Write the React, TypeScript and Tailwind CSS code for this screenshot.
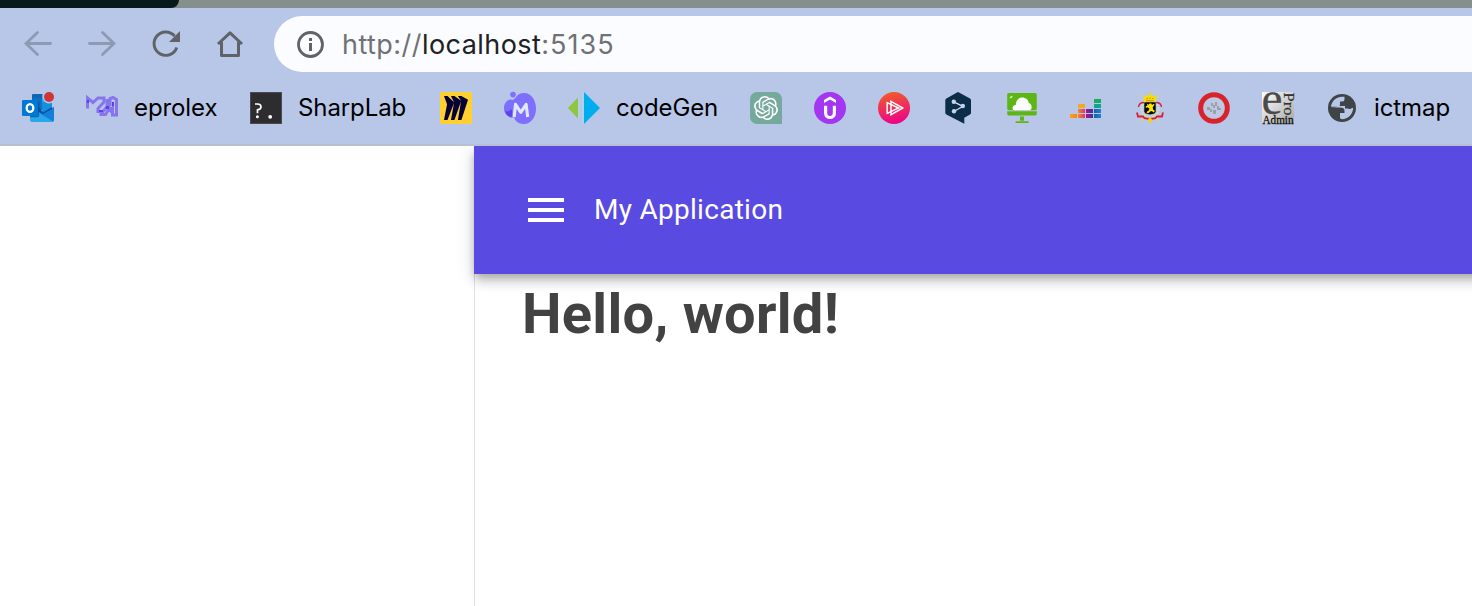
import type { ReactNode } from "react";
import { SiOpenai } from "react-icons/si";

function Icon({ children }: { children: ReactNode }) {
  return (
    <svg viewBox="0 0 32 32" className="block h-8 w-8 shrink-0 overflow-visible">
      {children}
    </svg>
  );
}

function Outlook() {
  return (
    <Icon>
      <path d="M11 2h18a1 1 0 0 1 1 1v15H10V3a1 1 0 0 1 1-1Z" fill="#1066b5" />
      <path d="M20 2h10v8H20z" fill="#28a8ea" />
      <path d="M10 6h10v12H10z" fill="#0f6fc4" />
      <path d="M20 10h10v10H20z" fill="#1490df" />
      <path d="M8 15l12 7 12-7v13a2 2 0 0 1-2 2H10a2 2 0 0 1-2-2Z" fill="#28a8ea" />
      <path d="M32 15v13a2 2 0 0 1-1 1.6L18 21.5Z" fill="#1280d8" />
      <path d="M16 14l5 6.500 9-5.500v2l-9 5-5-2Z" fill="#0a5299" />
      <path d="M16 9.500h1.200v14q0 1.800-1.800 1.800H8V24h8Z" fill="#0a4c94" opacity=".7" />
      <rect y="8" width="16" height="16" rx="1.2" fill="#0078d4" />
      <ellipse cx="8" cy="16" rx="3.3" ry="3.9" fill="none" stroke="#fff" strokeWidth="2.3" />
      <circle cx="27" cy="5" r="6.4" fill="#b8c6e8" />
      <circle cx="27" cy="5" r="5" fill="#d13438" />
    </Icon>
  );
}

function Eprolex() {
  return (
    <Icon>
      <g fill="none" stroke="#8675ef" strokeWidth="3">
        <path d="M1.500 16.500V6l5.500 4.500L12 6h6v4l-6 6.500v3h5l5-6" />
        <path d="M21 7v6l2.500 3-4 6.500h-6M24 14V6.500l3-1 3.500 2V23h-4v-7l-3 4" />
      </g>
      <path d="M26 10h2v4h-2zM13 18h4v2h-4zM20 14h3v3h-3zM1 8h2v3H1z" fill="#5f3df0" />
    </Icon>
  );
}

function SharpLab() {
  return (
    <Icon>
      <rect width="32" height="32" fill="#4a4a50" />
      <rect x="1" y="1" width="30" height="30" fill="#2d2d30" />
      <path d="M5 12h2.500q3.500 0 3.500 2.800t-3.500 3v3.400" fill="none" stroke="#fff" strokeWidth="1.7" />
      <circle cx="7.4" cy="24.8" r="1.5" fill="#fff" />
      <circle cx="20.2" cy="24.8" r="1.9" fill="#fff" />
    </Icon>
  );
}

function Miro() {
  return (
    <Icon>
      <rect width="32" height="32" rx="2" fill="#ffd02f" />
      <path
        transform="translate(4 4)"
        fill="#050038"
        d="M17.392 0H13.9L17 4.808 10.444 0H6.949l3.102 6.3L3.494 0H0l3.05 8.131L0 24h3.494L10.05 6.985 6.949 24h3.494L17 5.494 13.899 24h3.493L24 3.672 17.392 0z"
      />
    </Icon>
  );
}

function MBlob() {
  return (
    <Icon>
      <circle cx="9" cy="2.6" r="2.8" fill="#7e6fff" />
      <path d="M0 16C0 10 5 6 9 8c4-3 4-7 11-7 8 0 12 8 12 16s-5 15-12 15c-6 0-9-3-10-7-2 1-4 1-6-1-3-2-4-5-4-8Z" fill="#7e6fff" />
      <path d="M.8 18c2 3 5 1 7.200-1v7.500c-4 1-6.400-2.500-7.200-6.500Z" fill="#5b43f0" />
      <path d="M10.200 25 11.500 12.300l5.300 8 5.300-8L23.700 25" fill="none" stroke="#e3e7fc" strokeWidth="3.1" strokeLinejoin="round" />
    </Icon>
  );
}

function CodeGen() {
  return (
    <Icon>
      <path d="M10 5.5v21L0 16Z" fill="#8dc63f" />
      <path d="M10 5.500h1.500v21H10zM14 1h2v30h-2z" fill="#b0d2e6" />
      <path d="M16 0l16 16-16 16Z" fill="#00aeef" />
    </Icon>
  );
}

function ChatGpt() {
  return (
    <div className="flex h-8 w-8 shrink-0 items-center justify-center rounded-l-[7px] rounded-tr-[7px] bg-[#75a99b] text-white">
      <SiOpenai size={24} />
    </div>
  );
}

function Udemy() {
  return (
    <Icon>
      <circle cx="16" cy="16" r="16" fill="#a435f0" />
      <path d="M16 4.4l6 3.5v3.2l-6-3.5-6 3.5V7.9Z" fill="#fff" />
      <path d="M11.6 13.8v7.2c0 6 8.800 6 8.800 0v-7.2" fill="none" stroke="#fff" strokeWidth="3.2" />
    </Icon>
  );
}

function Pluralsight() {
  return (
    <Icon>
      <defs>
        <linearGradient id="ps" x1="0.4" y1="0" x2="0.6" y2="1">
          <stop offset="0" stopColor="#f15b2a" />
          <stop offset="1" stopColor="#ec008c" />
        </linearGradient>
      </defs>
      <circle cx="16" cy="16" r="16" fill="url(#ps)" />
      <path d="M9.2 10.6 20.5 16 9.2 21.4ZM13 9.3 24.8 16 13 22.7Z" fill="none" stroke="#fff" strokeWidth="1.5" />
    </Icon>
  );
}

function DeepL() {
  return (
    <Icon>
      <path d="M15 .4q1-.6 2 0l11 6.1q1 .6 1 1.7v12.6q0 1.1-1 1.7l-5.7 3.2v6L16 28.4l-11.600-6q-1.100-.6-1.100-1.700V8.200q0-1.100 1.100-1.700Z" fill="#0b2d48" />
      <path d="M11.8 9.8 20.4 14.2M19.8 15 12.2 19.2" stroke="#d5e0f2" strokeWidth="1.3" />
      <g fill="#c4d3ec">
        <circle cx="11.8" cy="9.7" r="2.2" />
        <circle cx="20.8" cy="14" r="2.2" />
        <circle cx="12" cy="19.2" r="2.2" />
      </g>
    </Icon>
  );
}

function CloudScreen() {
  return (
    <Icon>
      <rect x="1.2" y="1" width="29.6" height="17.2" rx="1.6" fill="#5cb615" />
      <path d="M1.2 19.2h29.600v2.600q0 1.600-1.600 1.600H2.800q-1.600 0-1.600-1.600ZM14 24.600h4v4.200h-4zM9.600 29.200h13v1.800h-13z" fill="#5cb615" />
      <path d="M3.8 6.6q0-2.800 3-2.800l-1 2Z" fill="#d9efc5" />
      <path d="M8 18.200c-2.200 0-2.200-5 1.800-5.400C10 8 13 5.600 16 5.600c4 0 6.200 2.400 6.800 5.400 3.600.2 3.600 7.200 1 7.200Z" fill="#fff" />
    </Icon>
  );
}

function Deezer() {
  return (
    <Icon>
      <defs>
        <linearGradient id="dz1">
          <stop offset="0" stopColor="#f9a11b" />
          <stop offset="1" stopColor="#f4831f" />
        </linearGradient>
        <linearGradient id="dz2">
          <stop offset="0" stopColor="#f58a1f" />
          <stop offset="1" stopColor="#d9366f" />
        </linearGradient>
        <linearGradient id="dz3">
          <stop offset="0" stopColor="#b3127f" />
          <stop offset="1" stopColor="#2f3a9c" />
        </linearGradient>
        <linearGradient id="dz4">
          <stop offset="0" stopColor="#1f5bb0" />
          <stop offset="1" stopColor="#1a86cf" />
        </linearGradient>
      </defs>
      <path d="M0 22h7v4H0z" fill="url(#dz1)" />
      <path d="M8 22h7v4H8zM8 17h7v4H8z" fill="url(#dz2)" />
      <path d="M8 12h7v4H8z" fill="#f0a92b" />
      <path d="M16 22h7v4h-7zM16 17h7v4h-7z" fill="url(#dz3)" />
      <path d="M24 22h7v4h-7zM24 17h7v4h-7z" fill="url(#dz4)" />
      <path d="M24 12h7v4h-7z" fill="#13a58a" />
      <path d="M24 7h7v4h-7z" fill="#1aab5c" />
    </Icon>
  );
}

function Crest() {
  return (
    <Icon>
      <path d="M7 3 25 30M25 3 7 30" stroke="#e0d470" strokeWidth="1.200" />
      <circle cx="16" cy="17" r="8.500" fill="none" stroke="#d8dcc8" strokeWidth="2" strokeDasharray="2 1" />
      <path d="M11 9.800 9.800 5l2.600-1.500L16 3l3.600.5L22.200 5 21 9.800Z" fill="#f6de00" />
      <path d="M12.500 6.500h1.500M15.300 6h1.500M18 6.500h1.500M12 8.800h8" stroke="#d08a20" strokeWidth="1" />
      <path d="M15.300 0h1.400v3.500h-1.400z" fill="#f4d800" />
      <path d="M4.500 15q.5-4.500 5.500-4.500M27.500 15q-.5-4.500-5.500-4.500" stroke="#cf2736" strokeWidth="1.400" fill="none" />
      <path d="M10.300 10.300h11.400v9q0 2.800-5.700 3.200-5.700-.4-5.700-3.200Z" fill="#080808" />
      <path
        d="M12.500 11.500l2 1.200 1-1.200h2l.5 1.700 1.500-1.500 1 1-1.800 2.500.5 2.500 1.700 1-1 1.700-2.200-1.500-1.500.5-1.500 1.700-2.200.2.500-1.900 1.500-.7 1-2-2-1.500-1.700.7v-1.700l1.700-.7Z"
        fill="#ffe800"
      />
      <path d="M3 20.500l1 4 5 0 1.500 1.700 5.500.8 5.500-.8 1.500-1.700 5 0 1-4" stroke="#d5202e" strokeWidth="1.800" fill="none" />
      <circle cx="16" cy="28" r="2" fill="#f4d800" />
      <path d="M15.300 28h1.400v4h-1.400z" fill="#f4d800" />
    </Icon>
  );
}

function RedRing() {
  return (
    <Icon>
      <circle cx="16" cy="16" r="13.300" fill="#bdc8e3" stroke="#d8232a" strokeWidth="5" />
      <g fill="#9aa0ae">
        <path d="M9 15h3v3H9zM12 17h2v3h-2zM13 11h2v3h-2zM15 13h2v3h-2zM17 10h2v4h-2zM15 18h3v4h-3zM19 14h2v4h-2zM21 16h2v2h-2z" />
      </g>
    </Icon>
  );
}

function EProAdmin() {
  return (
    <Icon>
      <defs>
        <linearGradient id="ep" x1="0" y1="0" x2="1" y2="1">
          <stop offset="0" stopColor="#ffffff" />
          <stop offset="1" stopColor="#a6a6a6" />
        </linearGradient>
      </defs>
      <rect width="32" height="32" fill="url(#ep)" />
      <g fontFamily="Liberation Serif, serif">
        <text x="-.5" y="22" fontSize="47" fill="#4a4a4a" stroke="#4a4a4a" strokeWidth=".3" textLength="21" lengthAdjust="spacingAndGlyphs">e</text>
        <text transform="translate(21.500 .5) rotate(90)" fontSize="14.500" fill="#333" stroke="#333" strokeWidth=".2" textLength="23" lengthAdjust="spacingAndGlyphs">Pro</text>
        <text x=".5" y="31.500" fontSize="12" fill="#111" stroke="#111" strokeWidth=".3" textLength="31" lengthAdjust="spacingAndGlyphs">Admin</text>
      </g>
    </Icon>
  );
}

function Globe() {
  return (
    <Icon>
      <circle cx="16" cy="16" r="14" fill="#3f4447" />
      <path d="M5 14.800C5.500 9.500 10 5 16 4.800h2.500V7.500q0 2-2.200 2H14v3q0 1.300-1.400 1.300H11v1Z" fill="#b8c6e8" />
      <path
        d="M5 15.500h9q4.500 0 4.500 3v2.500H14v4.500q0 1.700 2 1.700c6 0 11-5 11.200-11.500l-2.200.8q-1.500 1.200-3 0h-3V14h-5.500v-1.500H11v2.500Z"
        fill="#b8c6e8"
      />
      <path d="M3.500 16h9.500q1.500 0 2.500 1.200t2.200 1.300v2.300H14q-1.500.2-1.500 1.800v4.500C7 25 3.500 21 3.500 16Z" fill="#3f4447" />
    </Icon>
  );
}

function Bookmark({ icon, label, labelClass = "" }: { icon: ReactNode; label?: string; labelClass?: string }) {
  return (
    <div className="flex h-8 shrink-0 items-center gap-4">
      {icon}
      {label && (
        <span className={`whitespace-nowrap text-[24px] leading-8 tracking-[-0.1px] text-black ${labelClass}`}>{label}</span>
      )}
    </div>
  );
}

function Toolbar() {
  return (
    <div className="flex h-[72px] items-center bg-[#b8c6e8] pl-[22px]">
      <div className="flex gap-8">
        <Icon>
          <path d="M28.500 15.500H4M15.500 4.500l-11.500 11 11.500 11" fill="none" stroke="#8e9ab3" strokeWidth="2.800" strokeLinecap="round" />
        </Icon>
        <Icon>
          <path d="M3.500 15.500H28M16.500 4.500l11.500 11-11.500 11" fill="none" stroke="#8e9ab3" strokeWidth="2.800" strokeLinecap="round" />
        </Icon>
        <Icon>
          <path d="M26.800 19.500A11.700 11.700 0 1 1 24.600 8" fill="none" stroke="#5f6368" strokeWidth="2.900" />
          <path d="M30 3v11H19Z" fill="#5f6368" />
        </Icon>
        <Icon>
          <path d="M4 16 16 4.800 28 16M7.500 14v13.500h17V14" fill="none" stroke="#5f6368" strokeWidth="3" strokeLinejoin="round" />
        </Icon>
      </div>
      <div className="ml-7 flex h-14 flex-1 items-center rounded-l-full bg-[#fbfcff] pl-5">
        <Icon>
          <circle cx="16.500" cy="16.500" r="12" fill="none" stroke="#5f6368" strokeWidth="2.800" />
          <path d="M15 10h3v3h-3zM15 15h3v8h-3z" fill="#5f6368" />
        </Icon>
        <div className="ml-4 pt-0.5 whitespace-nowrap text-[27px] leading-8 tracking-[0.45px] text-[#6f7275]">
          http://<span className="text-[#202124]">localhost</span>
          <span className="tracking-[1px]">:5135</span>
        </div>
      </div>
    </div>
  );
}

export default function App() {
  return (
    <div className="flex h-[606px] w-[1472px] flex-col overflow-hidden bg-white font-['Inter','Liberation_Sans',sans-serif]">
      <div className="h-2 shrink-0 bg-[#858f8c]">
        <div className="h-2 w-[179px] rounded-br-[12px] bg-[#081a19]" />
      </div>
      <Toolbar />
      <div className="flex h-[66px] shrink-0 items-start gap-8 border-b-2 border-[#b5c0d1] bg-[#b8c6e8] pt-3 pl-[22px]">
        <Bookmark icon={<Outlook />} />
        <Bookmark icon={<Eprolex />} label="eprolex" labelClass="w-[84px]" />
        <Bookmark icon={<SharpLab />} label="SharpLab" labelClass="w-[110px]" />
        <Bookmark icon={<Miro />} />
        <Bookmark icon={<MBlob />} />
        <Bookmark icon={<CodeGen />} label="codeGen" labelClass="w-[102px]" />
        <Bookmark icon={<ChatGpt />} />
        <Bookmark icon={<Udemy />} />
        <Bookmark icon={<Pluralsight />} />
        <Bookmark icon={<DeepL />} />
        <Bookmark icon={<CloudScreen />} />
        <Bookmark icon={<Deezer />} />
        <Bookmark icon={<Crest />} />
        <Bookmark icon={<RedRing />} />
        <Bookmark icon={<EProAdmin />} />
        <Bookmark icon={<Globe />} label="ictmap" labelClass="w-[78px]" />
      </div>
      <div className="flex flex-1 overflow-hidden font-['Roboto',sans-serif]">
        <aside className="w-[474px] shrink-0" />
        <main className="flex-1 border-l border-[#e0e0e0]">
          <header className="-mr-10 -ml-px flex h-32 items-center bg-[#594ae2] pl-12 text-white shadow-[0_4px_8px_-2px_rgba(0,0,0,0.2),0_8px_10px_0_rgba(0,0,0,0.14),0_2px_20px_0_rgba(0,0,0,0.12)]">
            <svg viewBox="0 0 24 24" className="h-12 w-12" fill="currentColor">
              <path d="M3 18h18v-2H3v2zm0-5h18v-2H3v2zm0-7v2h18V6H3z" />
            </svg>
            <span className="ml-6 whitespace-nowrap text-[28px] leading-[42px] tracking-[0.28px]">My Application</span>
          </header>
          <h1 className="pt-2 pl-[47px] text-[56px] leading-[64px] font-bold tracking-[0.28px] text-[#424242]">Hello, world!</h1>
        </main>
      </div>
    </div>
  );
}
